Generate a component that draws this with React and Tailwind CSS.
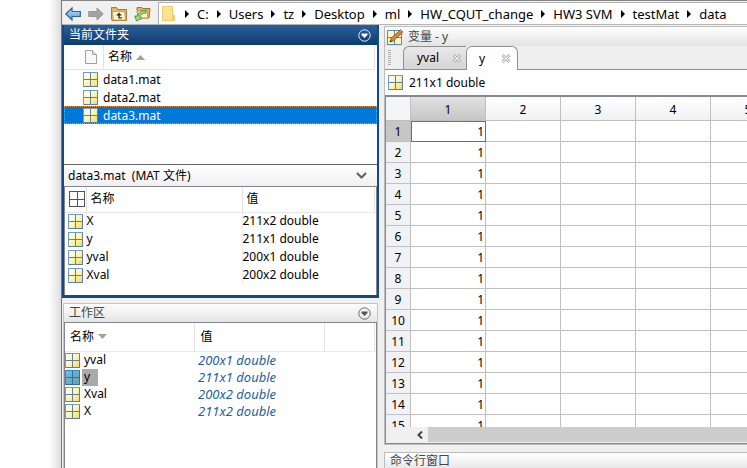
import React from "react";

const crumbs = ["C:", "Users", "tz", "Desktop", "ml", "HW_CQUT_change", "HW3 SVM", "testMat", "data"];
const files = ["data1.mat", "data2.mat", "data3.mat"];
const details = [
  ["X", "211x2 double"],
  ["y", "211x1 double"],
  ["yval", "200x1 double"],
  ["Xval", "200x2 double"],
];
const workspace = [
  ["yval", "200x1 double"],
  ["y", "211x1 double"],
  ["Xval", "200x2 double"],
  ["X", "211x2 double"],
];
const columns = [1, 2, 3, 4, 5];
const rows = Array.from({ length: 15 }, (_, i) => i + 1);

function GridIcon({ tone = "yellow" }) {
  const blue = tone === "blue";
  return (
    <svg viewBox="0 0 15 15" className="size-[15px] shrink-0" shapeRendering="crispEdges" aria-hidden="true">
      <defs>
        <linearGradient id={`cell-${tone}`} x1="0" y1="0" x2="1" y2="1">
          <stop offset="0" stopColor={blue ? "#7dbcf0" : "#ffffff"} />
          <stop offset=".35" stopColor={blue ? "#6fb0d0" : "#fffbd0"} />
          <stop offset=".7" stopColor={blue ? "#6aa9b0" : "#fbec8c"} />
          <stop offset="1" stopColor={blue ? "#6aa39c" : "#efcf70"} />
        </linearGradient>
      </defs>
      <rect width="15" height="15" fill={`url(#cell-${tone})`} />
      <path d="M.5 14.500V.5h14" fill="none" stroke={blue ? "#2f86cf" : "#6d9cc6"} />
      <path d="M.5 14.500h14V.5M7.500 1v13M1 7.500h13" fill="none" stroke={blue ? "#2c6fa8" : "#5f7f9c"} />
    </svg>
  );
}

function PlainGridIcon() {
  return (
    <svg viewBox="0 0 16 16" className="size-4 shrink-0" shapeRendering="crispEdges" aria-hidden="true">
      <path d="M.5.5h15v15H.5zM8.500 1v14M1 8.500h14" fill="#fff" stroke="#555" />
    </svg>
  );
}

function ArrowIcon({ back }) {
  return (
    <svg viewBox="0 0 16 14" className="h-3.5 w-4" aria-hidden="true">
      <defs>
        <linearGradient id="arrowBlue" x1="0" y1="0" x2="0" y2="1">
          <stop offset="0" stopColor="#c7e4f7" />
          <stop offset="1" stopColor="#4f9bd0" />
        </linearGradient>
      </defs>
      {back ? (
        <path d="M.8 7 7 1v3.500h8.300v5H7V13z" fill="url(#arrowBlue)" stroke="#2f6797" strokeWidth="1.200" />
      ) : (
        <path d="M15.200 7 9 1v3.500H.7v5H9V13z" fill="#a3a3a3" stroke="#999" />
      )}
    </svg>
  );
}

function FolderUpIcon() {
  return (
    <svg viewBox="0 0 16 14" className="h-3.5 w-4" aria-hidden="true">
      <path d="M.5 12.500V.5h5l1.500 2h8.500v11H1z" fill="#e0b765" stroke="#a77b35" />
      <path d="M1.500 4.500h12l1 8.500H2.500z" fill="#fff6d6" stroke="#c79b4b" strokeWidth=".8" />
      <path d="M8 5.500 5 8.500h2.300V11.500H11v-1.300H8.700V8.500H11z" fill="#3b3322" />
    </svg>
  );
}

function FolderBrowseIcon() {
  return (
    <svg viewBox="0 0 17 16" className="h-4 w-[17px]" aria-hidden="true">
      <path d="M3 3.500V1.500h4.500l1.500 1H16L15 12H4z" fill="#dfb662" stroke="#9c7334" />
      <path d="M3.500 4.500h9.500l1 7.500H4.500z" fill="#fff0bd" stroke="#c79b4b" />
      <path d="M12 4.500C8 4 4.500 6 4 10H.8l1.700 5 5.500-2.500-2-1.300C6.500 8.500 8.500 7 12 7z" fill="#9dd884" stroke="#3c8636" strokeWidth=".8" />
    </svg>
  );
}

function FolderIcon() {
  return (
    <svg viewBox="0 0 13 17" className="h-[17px] w-[13px] shrink-0" aria-hidden="true">
      <path d="M0 1h10v15H0z" fill="#ffe291" />
      <path d="M10 10h2.500v6H10z" fill="#f8cf64" />
      <path d="M.5 1.500h10v9h2v5H.5z" fill="none" stroke="#f3cf70" />
    </svg>
  );
}

function PageIcon() {
  return (
    <svg viewBox="0 0 12 14" className="h-3.5 w-3 shrink-0" aria-hidden="true">
      <path d="M.5.5h7l4 4v9H.5z" fill="#f8f8f8" stroke="#a2a2a2" />
      <path d="M7.500.5v4h4" fill="#e2e2e2" stroke="#a2a2a2" />
    </svg>
  );
}

function EditGridIcon() {
  return (
    <svg viewBox="0 0 17 16" className="h-4 w-[17px] shrink-0" aria-hidden="true">
      <path d="M.5 1.500h14v14H.5z" fill="#fff6bd" stroke="#5f88ac" />
      <path d="M7.500 1.500v14M.5 8.500h14" stroke="#5f88ac" />
      <path d="m3 13 1.200-3.700L13.500.8l2.300 2.300-9.300 8.700z" fill="#d6893c" stroke="#72401c" strokeWidth=".8" />
      <path d="m12.300 1.900 1.400-1.300 2.400 2.300-1.500 1.300z" fill="#d98080" />
      <path d="m3 13 .6-1.800 1.200 1.100z" fill="#222" />
    </svg>
  );
}

function MenuCircle({ light }) {
  return (
    <button aria-label="面板菜单" className="flex">
      <svg viewBox="0 0 13 13" className="size-[13px]" aria-hidden="true">
        <circle cx="6.500" cy="6.500" r="5.700" fill="none" stroke={light ? "#e8f0f8" : "#6b6b6b"} />
        <path d="M3.500 4.500h6v1.500l-3 3-3-3z" fill={light ? "#fff" : "#555"} />
      </svg>
    </button>
  );
}

function CloseIcon() {
  return (
    <svg viewBox="0 0 10 9" className="h-[9px] w-2.5" aria-hidden="true">
      <path d="m1.500 1 7 7m0-7-7 7" stroke="#a0a0a0" strokeWidth="2.800" />
      <path d="m1.500 1 7 7m0-7-7 7" stroke="#efefef" strokeWidth="1.200" />
    </svg>
  );
}

function Triangle({ up }) {
  return (
    <svg viewBox="0 0 9 5" className="ml-1 h-[5px] w-[9px]" aria-hidden="true">
      <path d={up ? "M0 5h9L4.500 0z" : "M0 0h9L4.500 5z"} fill="#a3a391" />
    </svg>
  );
}

function Toolbar() {
  return (
    <header className="flex h-[25px] shrink-0 border-t border-b border-t-[#858585] border-b-[#b5b5b5] bg-[#f0f0f0]">
      <div className="flex w-24 shrink-0 items-center gap-[7px] pt-0.5 pl-[3px]">
        <button aria-label="后退"><ArrowIcon back /></button>
        <button aria-label="前进"><ArrowIcon /></button>
        <button aria-label="向上一级"><FolderUpIcon /></button>
        <button aria-label="浏览文件夹"><FolderBrowseIcon /></button>
      </div>
      <nav className="mt-px flex flex-1 items-center overflow-hidden border-t border-l border-[#b0b0b0] bg-white pl-[3px] text-[13px] leading-5 whitespace-nowrap">
        <span className="mr-0.5"><FolderIcon /></span>
        {crumbs.map((c) => (
          <React.Fragment key={c}>
            <svg viewBox="0 0 4 8" className="mx-2 h-2 w-1 shrink-0" aria-hidden="true">
              <path d="M0 0l4 4-4 4z" fill="#000" />
            </svg>
            <a href="#" className="shrink-0">{c}</a>
          </React.Fragment>
        ))}
      </nav>
    </header>
  );
}

function CurrentFolder() {
  return (
    <section className="flex h-[273px] shrink-0 flex-col border-2 border-t-0 border-b-[3px] border-[#154a83] bg-white">
      <h2 className="flex h-5 shrink-0 items-center justify-between bg-linear-to-b from-[#2b5f98] to-[#0e3c70] pr-1.5 pl-[5px] text-white">
        当前文件夹
        <MenuCircle light />
      </h2>
      <div className="mr-0.5 flex h-[25px] shrink-0 items-center border-r border-b border-[#e3e3e3] pl-[21px]">
        <PageIcon />
        <div className="ml-1.5 flex h-full items-center border-l border-[#e3e3e3] pl-1">
          名称
          <Triangle up />
        </div>
      </div>
      <ul className="flex-1">
        {files.map((f) => (
          <li
            key={f}
            className={
              "flex h-[18px] items-center gap-[5px] border border-dotted pl-[18px] " +
              (f === "data3.mat" ? "border-[#f0913a] bg-[#0078d7] text-white" : "border-transparent")
            }
          >
            <GridIcon />
            <span className="pt-0.5">{f}</span>
          </li>
        ))}
      </ul>
      <h3 className="flex h-[22px] shrink-0 items-center justify-between border-t border-[#666] bg-linear-to-b from-white to-[#f0f0f0] pr-2.5 pl-1">
        <span>data3.mat&nbsp; (MAT 文件)</span>
        <button aria-label="折叠">
          <svg viewBox="0 0 11 7" className="h-[7px] w-[11px]" aria-hidden="true">
            <path d="m1 1 4.500 4.500L10 1" fill="none" stroke="#606060" strokeWidth="2" />
          </svg>
        </button>
      </h3>
      <div className="h-[109px] shrink-0 border border-b-0 border-[#858590]">
        <table className="w-full table-fixed border-collapse">
          <colgroup>
            <col className="w-[21px]" />
            <col className="w-[156px]" />
            <col />
            <col className="w-0.5" />
          </colgroup>
          <thead>
            <tr className="h-[25px] border-b border-[#e6e6e6]">
              <th className="border-r border-[#e3e3e3] p-0 pl-1"><PlainGridIcon /></th>
              <th className="border-r border-[#e3e3e3] p-0 pl-1 text-left font-normal">名称</th>
              <th className="border-r border-[#e3e3e3] p-0 pl-1 text-left font-normal">值</th>
              <th className="p-0" />
            </tr>
          </thead>
          <tbody>
            {details.map(([n, v]) => (
              <tr key={n} className="h-[18px]">
                <td className="border-r border-[#ececec] p-0 pl-[3px]"><GridIcon /></td>
                <td className="border-r border-[#ececec] p-0">{n}</td>
                <td className="p-0">{v}</td>
                <td className="p-0" />
              </tr>
            ))}
          </tbody>
        </table>
      </div>
    </section>
  );
}

function Workspace() {
  return (
    <section className="mt-[5px] mr-px ml-px flex min-h-0 flex-1 flex-col border border-b-0 border-[#c4c4c4] bg-white">
      <h2 className="flex h-[18px] shrink-0 items-center justify-between bg-linear-to-b from-[#fdfdfd] to-[#e4e4e4] pr-1.5 pl-[5px] text-[#444]">
        工作区
        <MenuCircle />
      </h2>
      <div className="flex-1 border border-b-0 border-[#858590] pr-px">
        <table className="w-full table-fixed border-collapse">
          <colgroup>
            <col className="w-[129px]" />
            <col className="w-[130px]" />
            <col />
          </colgroup>
          <thead>
            <tr className="h-7 border-b border-[#ebebeb]">
              <th className="border-r border-[#e3e3e3] p-0 pl-[5px] text-left font-normal">
                <span className="flex items-center">名称<Triangle /></span>
              </th>
              <th className="border-r border-[#e3e3e3] p-0 pl-1.5 text-left font-normal">值</th>
              <th className="border-r border-[#e3e3e3] p-0" />
            </tr>
          </thead>
          <tbody>
            {workspace.map(([n, v]) => (
              <tr key={n} className="h-[17px]">
                <td className="p-0">
                  <span className="flex h-[17px] items-center gap-0.5">
                    <GridIcon tone={n === "y" ? "blue" : "yellow"} />
                    <span className={"flex h-[17px] items-center pl-0.5 " + (n === "y" ? "bg-[#aaaaaa] pr-2" : "")}>{n}</span>
                  </span>
                </td>
                <td className="p-0 pl-1 text-[13px] leading-4 text-[#1f5f9a] italic">{v}</td>
                <td className="p-0" />
              </tr>
            ))}
          </tbody>
        </table>
      </div>
    </section>
  );
}

function Variables() {
  return (
    <section className="mt-px flex min-h-0 flex-1 flex-col overflow-hidden border-t border-b border-l border-[#bdbdbd] bg-white">
      <h2 className="flex h-[19px] shrink-0 items-center gap-1 bg-linear-to-b from-white to-[#e2e2e2] pl-0.5 text-[#444]">
        <EditGridIcon />
        变量 - y
      </h2>
      <div className="flex h-6 shrink-0 bg-[#efefef]">
        <div className="flex items-center border-b border-[#909090] pr-3 pl-[3px]">
          <div className="h-4 w-[3px] bg-[repeating-linear-gradient(to_bottom,#b0b0b0_0_1px,transparent_1px_2px)]" />
        </div>
        <div role="tablist" className="flex items-stretch">
          <div className="flex items-center rounded-tl-md border border-r-0 border-[#909090] bg-linear-to-b from-[#e9e9e9] to-[#d5d5d5] pr-1">
            <button role="tab" aria-selected="false" className="w-12 text-center">yval</button>
            <button aria-label="关闭 yval" className="flex w-2.5 justify-end"><CloseIcon /></button>
          </div>
          <div className="flex items-center rounded-t-md border border-b-0 border-[#909090] bg-white pr-1.5">
            <button role="tab" aria-selected="true" className="w-[30px] text-center">y</button>
            <button aria-label="关闭 y" className="flex w-3.5 justify-end"><CloseIcon /></button>
          </div>
        </div>
        <div className="flex-1 border-b border-[#909090]" />
      </div>
      <div className="flex h-[25px] shrink-0 items-center gap-1.5 pl-[3px]">
        <GridIcon />
        211x1 double
      </div>
      <div className="min-h-0 flex-1 overflow-hidden border-t-2 border-l border-[#858990]">
        <table className="w-[400px] table-fixed border-separate border-spacing-0">
          <thead>
            <tr className="h-6">
              <th className="w-[25px] border-r border-b border-[#c0c0c0] bg-[#f4f5f7] p-0" />
              {columns.map((c) => (
                <th
                  key={c}
                  className={
                    "w-[75px] border-r border-b border-[#c0c0c0] bg-linear-to-b p-0 pt-0.5 font-normal " +
                    (c === 1 ? "from-[#e2e2e2] to-[#c6c6c6]" : "from-white to-[#f0f1f4]")
                  }
                >
                  {c}
                </th>
              ))}
            </tr>
          </thead>
          <tbody>
            {rows.map((r) => (
              <tr key={r} className="h-[21px]">
                <th
                  className={
                    "border-r border-b border-[#c0c0c0] p-0 pt-0.5 text-center font-normal " +
                    (r === 1 ? "bg-[#c6c6c6]" : "bg-[#f1f2f5]")
                  }
                >
                  {r}
                </th>
                {columns.map((c) => (
                  <td
                    key={c}
                    className={
                      "border-r border-b border-[#c0c0c0] p-0 pt-0.5 pr-px text-right " +
                      (r === 1 && c === 1 ? "outline -outline-offset-1 outline-[#707070]" : "")
                    }
                  >
                    {c === 1 ? 1 : ""}
                  </td>
                ))}
              </tr>
            ))}
          </tbody>
        </table>
      </div>
      <div className="flex h-[17px] shrink-0 border-b border-l border-[#858990] bg-[#f0f0f0] pl-[25px]">
        <button aria-label="向左滚动" className="flex w-[17px] items-center justify-center">
          <svg viewBox="0 0 6 8" className="h-2 w-1.5" aria-hidden="true">
            <path d="M5 .5 1.500 4 5 7.500" fill="none" stroke="#444" strokeWidth="2" />
          </svg>
        </button>
        <div className="mb-px flex-1 bg-[#cdcdcd]" />
      </div>
    </section>
  );
}

export default function App() {
  return (
    <div className="flex h-screen overflow-hidden bg-white font-['Noto_Sans','Noto_Sans_CJK_SC',sans-serif] text-[12px] leading-4 text-black">
      <div className="w-[61px] shrink-0 bg-linear-to-r from-white from-80% to-[#dedede]" />
      <main className="flex min-w-0 flex-1 flex-col border-l border-[#777] bg-[#f0f0f0]">
        <Toolbar />
        <div className="flex min-h-0 flex-1 gap-[5px]">
          <div className="flex w-[317px] shrink-0 flex-col">
            <CurrentFolder />
            <Workspace />
          </div>
          <div className="flex min-w-0 flex-1 flex-col gap-[7px]">
            <Variables />
            <section className="h-4 shrink-0 overflow-hidden border-t border-l border-[#bdbdbd] bg-linear-to-b from-white to-[#e8e8e8] pl-[5px] text-[#444]">
              <h2>命令行窗口</h2>
            </section>
          </div>
        </div>
      </main>
    </div>
  );
}
